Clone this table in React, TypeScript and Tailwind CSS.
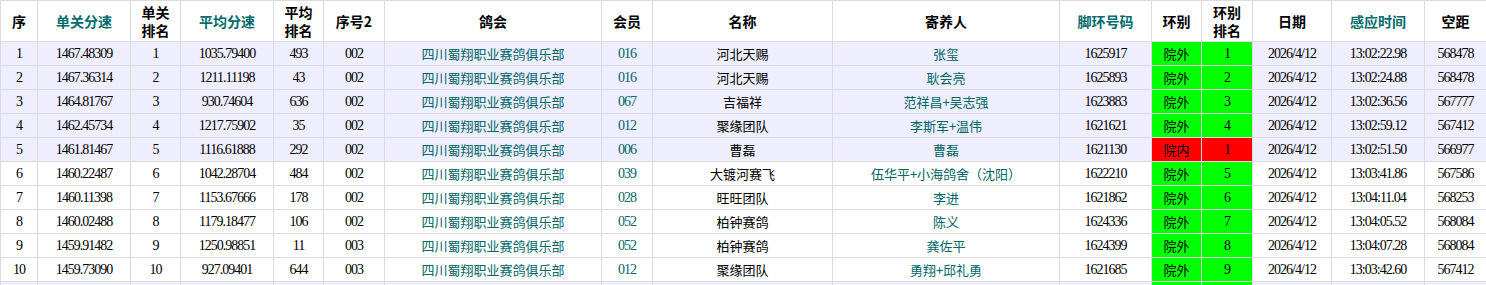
import React from "react";

type Row = {
  no: string;
  speed: string;
  rank: string;
  avg: string;
  avgRank: string;
  seq2: string;
  club: string;
  member: string;
  name: string;
  owner: string;
  ring: string;
  zone: string;
  zoneRank: string;
  date: string;
  time: string;
  dist: string;
};

const CLUB = "四川蜀翔职业赛鸽俱乐部";

const rows: Row[] = [
  { no: "1", speed: "1467.48309", rank: "1", avg: "1035.79400", avgRank: "493", seq2: "002", club: CLUB, member: "016", name: "河北天赐", owner: "张玺", ring: "1625917", zone: "院外", zoneRank: "1", date: "2026/4/12", time: "13:02:22.98", dist: "568478" },
  { no: "2", speed: "1467.36314", rank: "2", avg: "1211.11198", avgRank: "43", seq2: "002", club: CLUB, member: "016", name: "河北天赐", owner: "耿会亮", ring: "1625893", zone: "院外", zoneRank: "2", date: "2026/4/12", time: "13:02:24.88", dist: "568478" },
  { no: "3", speed: "1464.81767", rank: "3", avg: "930.74604", avgRank: "636", seq2: "002", club: CLUB, member: "067", name: "吉福祥", owner: "范祥昌+吴志强", ring: "1623883", zone: "院外", zoneRank: "3", date: "2026/4/12", time: "13:02:36.56", dist: "567777" },
  { no: "4", speed: "1462.45734", rank: "4", avg: "1217.75902", avgRank: "35", seq2: "002", club: CLUB, member: "012", name: "聚缘团队", owner: "李斯军+温伟", ring: "1621621", zone: "院外", zoneRank: "4", date: "2026/4/12", time: "13:02:59.12", dist: "567412" },
  { no: "5", speed: "1461.81467", rank: "5", avg: "1116.61888", avgRank: "292", seq2: "002", club: CLUB, member: "006", name: "曹磊", owner: "曹磊", ring: "1621130", zone: "院内", zoneRank: "1", date: "2026/4/12", time: "13:02:51.50", dist: "566977" },
  { no: "6", speed: "1460.22487", rank: "6", avg: "1042.28704", avgRank: "484", seq2: "002", club: CLUB, member: "039", name: "大镀河赛飞", owner: "伍华平+小海鸽舍（沈阳）", ring: "1622210", zone: "院外", zoneRank: "5", date: "2026/4/12", time: "13:03:41.86", dist: "567586" },
  { no: "7", speed: "1460.11398", rank: "7", avg: "1153.67666", avgRank: "178", seq2: "002", club: CLUB, member: "028", name: "旺旺团队", owner: "李进", ring: "1621862", zone: "院外", zoneRank: "6", date: "2026/4/12", time: "13:04:11.04", dist: "568253" },
  { no: "8", speed: "1460.02488", rank: "8", avg: "1179.18477", avgRank: "106", seq2: "002", club: CLUB, member: "052", name: "柏钟赛鸽", owner: "陈义", ring: "1624336", zone: "院外", zoneRank: "7", date: "2026/4/12", time: "13:04:05.52", dist: "568084" },
  { no: "9", speed: "1459.91482", rank: "9", avg: "1250.98851", avgRank: "11", seq2: "003", club: CLUB, member: "052", name: "柏钟赛鸽", owner: "龚佐平", ring: "1624399", zone: "院外", zoneRank: "8", date: "2026/4/12", time: "13:04:07.28", dist: "568084" },
  { no: "10", speed: "1459.73090", rank: "10", avg: "927.09401", avgRank: "644", seq2: "003", club: CLUB, member: "012", name: "聚缘团队", owner: "勇翔+邱礼勇", ring: "1621685", zone: "院外", zoneRank: "9", date: "2026/4/12", time: "13:03:42.60", dist: "567412" },
];

const NUM = "font-['Liberation_Serif','Times_New_Roman',serif] text-[14px] tracking-[-1px] text-black";
const CJK = "font-['Noto_Sans_CJK_SC','Noto_Sans',sans-serif] text-[13px]";
const HEAD = "font-['Noto_Sans_CJK_SC','Noto_Sans',sans-serif] text-[14px] font-bold leading-[18px]";

function H({ children, teal }: { children: React.ReactNode; teal?: boolean }) {
  return (
    <div className={`flex items-center justify-center bg-white text-center ${HEAD} ${teal ? "text-[#006b6b]" : "text-black"}`}>
      {children}
    </div>
  );
}

export default function App() {
  return (
    <div className="w-[1486px] h-[285px] overflow-hidden bg-white">
      <div className="grid grid-cols-[36px_92px_49px_92px_49px_60px_216px_50px_179px_226px_91px_49px_50px_78px_92px_61px] grid-rows-[40px_repeat(11,23px)] gap-px bg-[#dcdcdc] pl-px pt-px">
        <H>序</H>
        <H teal>单关分速</H>
        <H>
          单关
          <br />
          排名
        </H>
        <H teal>平均分速</H>
        <H>
          平均
          <br />
          排名
        </H>
        <H>序号2</H>
        <H>鸽会</H>
        <H>会员</H>
        <H>名称</H>
        <H>寄养人</H>
        <H teal>脚环号码</H>
        <H>环别</H>
        <H>
          环别
          <br />
          排名
        </H>
        <H>日期</H>
        <H teal>感应时间</H>
        <H>空距</H>

        {rows.map((r, i) => {
          const bg = Math.floor(i / 5) % 2 === 0 ? "bg-[#eeeeff]" : "bg-white";
          const zoneBg = r.zone === "院内" ? "bg-[#ff0000]" : "bg-[#00ff00]";
          const cell = `flex items-center justify-center whitespace-nowrap ${bg}`;
          return (
            <React.Fragment key={r.no}>
              <div className={`${cell} ${NUM}`}>{r.no}</div>
              <div className={`${cell} ${NUM}`}>{r.speed}</div>
              <div className={`${cell} ${NUM}`}>{r.rank}</div>
              <div className={`${cell} ${NUM}`}>{r.avg}</div>
              <div className={`${cell} ${NUM}`}>{r.avgRank}</div>
              <div className={`${cell} ${NUM}`}>{r.seq2}</div>
              <div className={`${cell} ${CJK} text-[#006666]`}>{r.club}</div>
              <div className={`${cell} ${NUM} !text-[#006666]`}>{r.member}</div>
              <div className={`${cell} ${CJK} text-black`}>{r.name}</div>
              <div className={`${cell} ${CJK} text-[#006666]`}>{r.owner}</div>
              <div className={`${cell} ${NUM}`}>{r.ring}</div>
              <div className={`flex items-center justify-center ${zoneBg} ${CJK} text-black`}>{r.zone}</div>
              <div className={`flex items-center justify-center ${zoneBg} ${NUM}`}>{r.zoneRank}</div>
              <div className={`${cell} ${NUM}`}>{r.date}</div>
              <div className={`${cell} ${NUM}`}>{r.time}</div>
              <div className={`${cell} ${NUM}`}>{r.dist}</div>
            </React.Fragment>
          );
        })}

        {/* next row, only its top edge is in view */}
        <div className="bg-[#eeeeff]" />
        <div className="bg-[#eeeeff]" />
        <div className="bg-[#eeeeff]" />
        <div className="bg-[#eeeeff]" />
        <div className="bg-[#eeeeff]" />
        <div className="bg-[#eeeeff]" />
        <div className="bg-[#eeeeff]" />
        <div className="bg-[#eeeeff]" />
        <div className="bg-[#eeeeff]" />
        <div className="bg-[#eeeeff]" />
        <div className="bg-[#eeeeff]" />
        <div className="bg-[#00ff00]" />
        <div className="bg-[#00ff00]" />
        <div className="bg-[#eeeeff]" />
        <div className="bg-[#eeeeff]" />
        <div className="bg-[#eeeeff]" />
      </div>
    </div>
  );
}
